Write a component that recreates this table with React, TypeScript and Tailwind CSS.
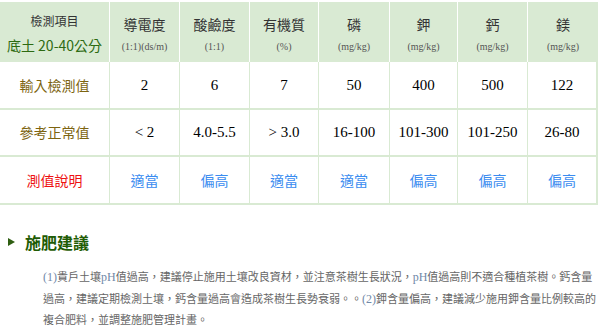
import React from "react";

const cjk = '"Noto Sans CJK TC", "Noto Sans", sans-serif';
const serif = '"Liberation Serif", "Noto Sans CJK TC", serif';

const heads = [
  { t: "導電度", u: "(1:1)(ds/m)" },
  { t: "酸鹼度", u: "(1:1)" },
  { t: "有機質", u: "(%)" },
  { t: "磷", u: "(mg/kg)" },
  { t: "鉀", u: "(mg/kg)" },
  { t: "鈣", u: "(mg/kg)" },
  { t: "鎂", u: "(mg/kg)" },
];
const vals = ["2", "6", "7", "50", "400", "500", "122"];
const refs = ["< 2", "4.0-5.5", "> 3.0", "16-100", "101-300", "101-250", "26-80"];
const notes = ["適當", "偏高", "適當", "適當", "偏高", "偏高", "偏高"];

function BodyCell({ children, className = "" }: { children: React.ReactNode; className?: string }) {
  return (
    <div className={`flex items-center justify-center border-r border-b-2 border-[#d9ead3] ${className}`}>
      {children}
    </div>
  );
}

function S({ children }: { children: React.ReactNode }) {
  return (
    <span className="text-[#7088a8] text-[12px]" style={{ fontFamily: serif }}>
      {children}
    </span>
  );
}

export default function App() {
  return (
    <div className="w-[600px] h-[335px] bg-white overflow-hidden" style={{ fontFamily: cjk }}>
      <div className="pt-[2px]">
        <div className="grid grid-cols-[110px_70px_70px_69px_71px_68px_70px_70px] grid-rows-[60px_48px_47px_48px] w-[598px]">
          {/* header */}
          <div className="bg-[#d9ead3] border-r border-white flex flex-col items-center justify-center">
            <div className="text-[12px] leading-[14px] text-[#333] mt-[3px]">檢測項目</div>
            <div className="text-[14px] leading-[16px] text-[#2d6a12] mt-[9px]">底土 20-40公分</div>
          </div>
          {heads.map((h, i) => (
            <div key={i} className={`bg-[#d9ead3] ${i < heads.length - 1 ? "border-r border-white" : ""} flex flex-col items-center justify-center`}>
              <div className="text-[14px] leading-[16px] text-[#333] mt-[5px]">{h.t}</div>
              <div className="text-[10px] leading-[12px] text-[#555] mt-[9px]" style={{ fontFamily: serif }}>{h.u}</div>
            </div>
          ))}
          {/* row 1 */}
          <BodyCell><span className="text-[14px] text-[#7d6410]">輸入檢測值</span></BodyCell>
          {vals.map((v, i) => (
            <BodyCell key={i} className={i === vals.length - 1 ? "border-r-2" : ""}>
              <span className="text-[15px] text-black" style={{ fontFamily: serif }}>{v}</span>
            </BodyCell>
          ))}
          {/* row 2 */}
          <BodyCell><span className="text-[14px] text-[#7d6410]">參考正常值</span></BodyCell>
          {refs.map((v, i) => (
            <BodyCell key={i} className={i === refs.length - 1 ? "border-r-2" : ""}>
              <span className="text-[15px] text-black" style={{ fontFamily: serif }}>{v}</span>
            </BodyCell>
          ))}
          {/* row 3 */}
          <BodyCell><span className="text-[14px] text-[#ee1111]">測值說明</span></BodyCell>
          {notes.map((v, i) => (
            <BodyCell key={i} className={i === notes.length - 1 ? "border-r-2" : ""}>
              <span className="text-[14px] text-[#3a8cf0]">{v}</span>
            </BodyCell>
          ))}
        </div>
      </div>

      <div className="mt-[26px] flex items-center pl-[8px] h-[22px]">
        <svg width="7" height="8" viewBox="0 0 7 8" className="mr-[10px]">
          <polygon points="0,0 7,4 0,8" fill="#2f5e12" />
        </svg>
        <span className="text-[16px] font-bold text-[#1f5c05] leading-[20px]">施肥建議</span>
      </div>

      <div className="pl-[43px] mt-[13px] text-[11px] leading-[20.5px] text-[#666] whitespace-nowrap">
        <div>
          <S>(1)</S>貴戶土壤<S>pH</S>值過高，建議停止施用土壤改良資材，並注意茶樹生長狀況，<S>pH</S>值過高則不適合種植茶樹。鈣含量
        </div>
        <div>
          過高，建議定期檢測土壤，鈣含量過高會造成茶樹生長勢衰弱。。<S>(2)</S>鉀含量偏高，建議減少施用鉀含量比例較高的
        </div>
        <div>複合肥料，並調整施肥管理計畫。</div>
      </div>
    </div>
  );
}
